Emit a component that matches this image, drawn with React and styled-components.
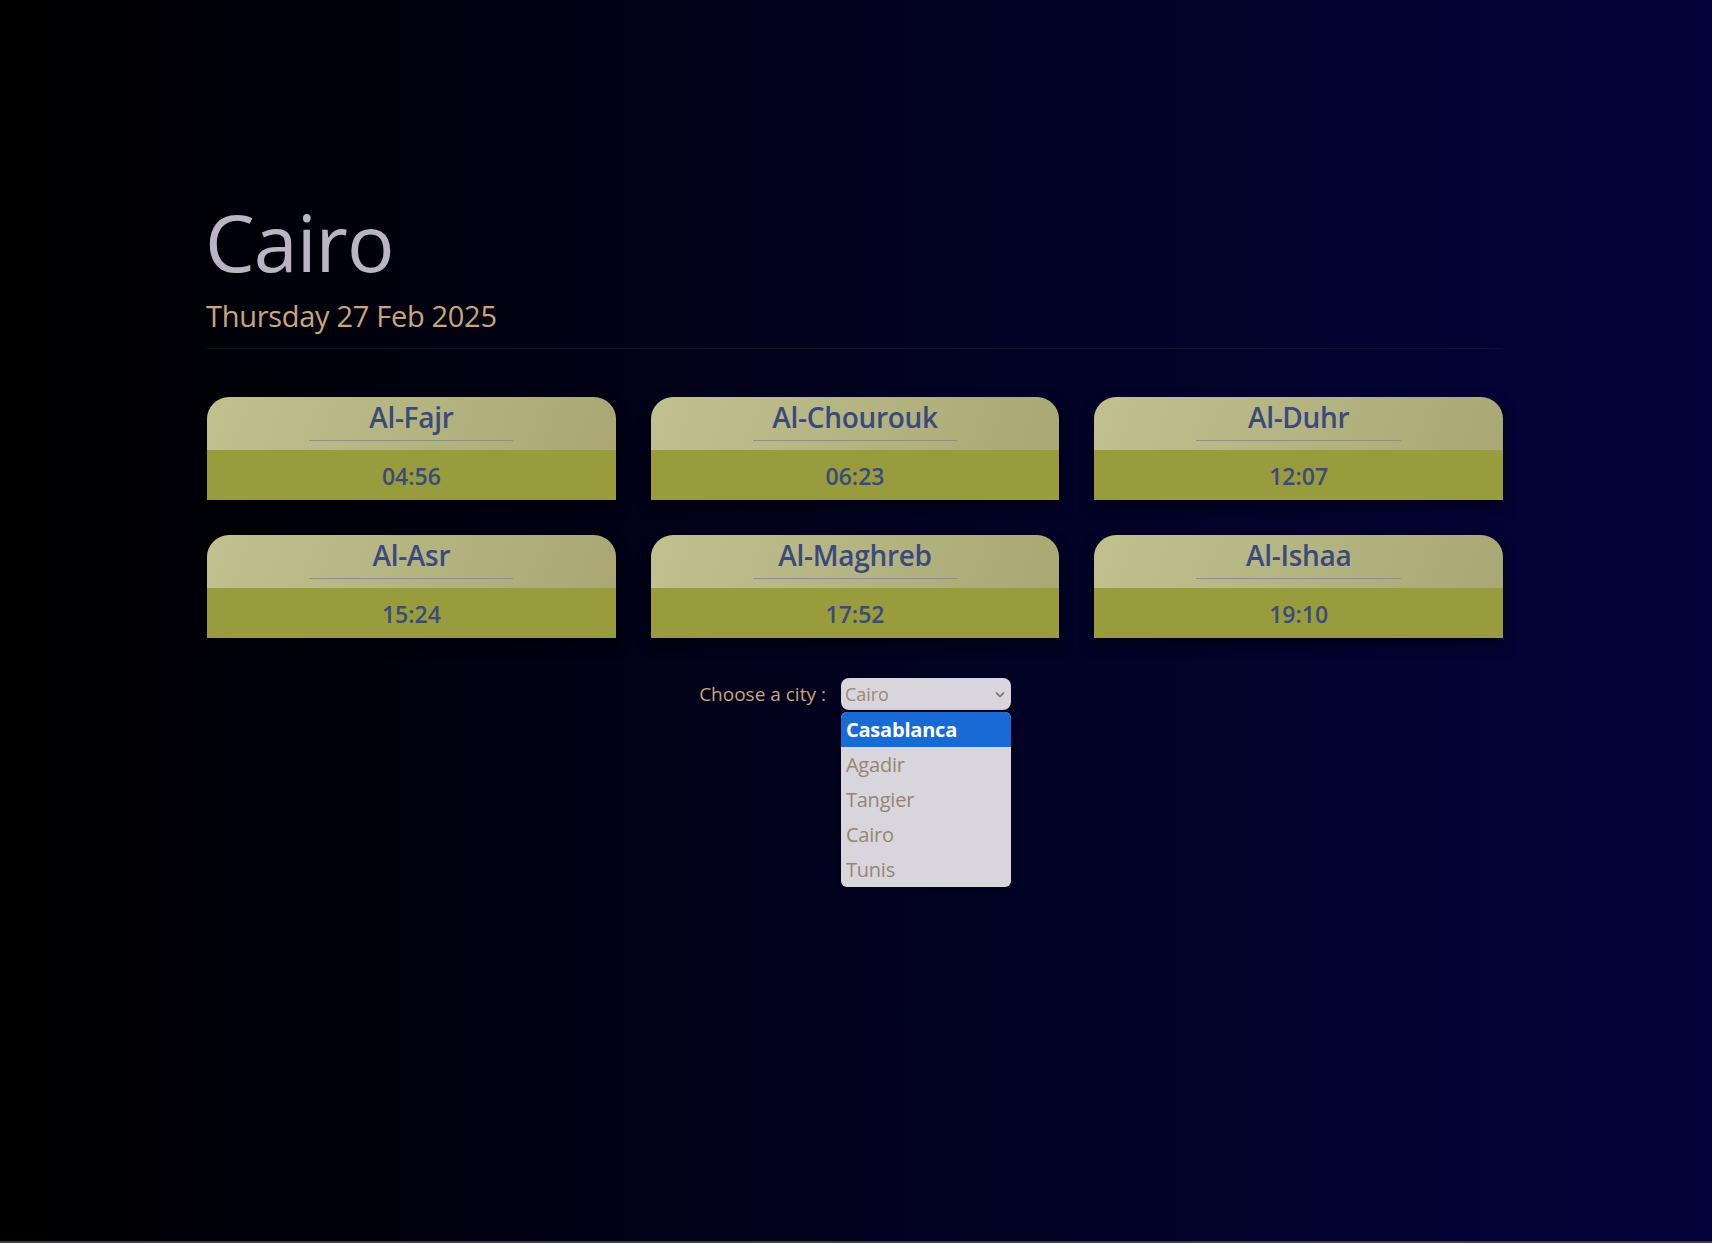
import React, { useState } from "react";
import styled, { createGlobalStyle } from "styled-components";

const GlobalStyle = createGlobalStyle`
  html, body {
    margin: 0;
    padding: 0;
  }
  body {
    font-family: "Open Sans", "Noto Sans", sans-serif;
    background: #000;
  }
`;

const Page = styled.div`
  box-sizing: border-box;
  min-height: 1243px;
  background: linear-gradient(to right, #000000 0%, #02021f 50%, #03033b 100%);
  border-bottom: 2px solid #3c3c44;
  padding-top: 202px;
`;

const Container = styled.div`
  width: 1296px;
  margin: 0 auto;
  transform: translateX(-1px);
`;

const CityTitle = styled.h1`
  margin: 0 0 0 -2px;
  font-size: 79px;
  line-height: 1;
  font-weight: 400;
  color: #bab4c5;
  letter-spacing: -1px;
`;

const DateLine = styled.h2`
  margin: 20px 0 0 -1px;
  font-size: 29px;
  line-height: 1;
  font-weight: 400;
  color: #c9a57f;
  letter-spacing: -0.3px;
`;

const Divider = styled.hr`
  margin: 18px 0 0;
  border: none;
  height: 1px;
  background: #13132a;
`;

const Grid = styled.div`
  margin-top: 48px;
  display: grid;
  grid-template-columns: repeat(3, 1fr);
  column-gap: 35px;
  row-gap: 35px;
`;

const Card = styled.div`
  border-radius: 22px 22px 0 0;
  overflow: hidden;
  box-shadow: 0 6px 14px rgba(0, 0, 0, 0.55);
`;

const CardHead = styled.div`
  padding: 6px 0 9px;
  background: linear-gradient(110deg, #c0c18f 0%, #a9a875 100%);
  display: flex;
  flex-direction: column;
  align-items: center;
`;

const PrayerName = styled.div`
  font-size: 28px;
  line-height: 29px;
  font-weight: 600;
  color: #3b4a7c;
  letter-spacing: -0.3px;
`;

const HeadRule = styled.div`
  margin-top: 8px;
  width: 50%;
  height: 1px;
  background: #8b918a;
`;

const CardTime = styled.div`
  box-sizing: border-box;
  height: 50px;
  padding-top: 2px;
  line-height: 48px;
  text-align: center;
  background: #989c3d;
  color: #3b4a7c;
  font-size: 23px;
  font-weight: 600;
`;

const CityRow = styled.div`
  margin-top: 40px;
  display: flex;
  justify-content: center;
  align-items: center;
  gap: 15px;
`;

const Label = styled.span`
  font-size: 19px;
  color: #c9a57f;
`;

const SelectWrap = styled.div`
  position: relative;
  width: 170px;
`;

const SelectBox = styled.div`
  box-sizing: border-box;
  height: 32px;
  border-radius: 8px;
  background: #d9d5dc;
  display: flex;
  align-items: center;
  justify-content: space-between;
  padding: 0 6px 0 4px;
  font-size: 18px;
  color: #9a8a73;
`;

const OptionList = styled.ul`
  position: absolute;
  top: 34px;
  left: 0;
  right: 0;
  margin: 0;
  padding: 0;
  list-style: none;
  background: #d9d5dc;
  border-radius: 6px;
  overflow: hidden;
  box-shadow: 0 2px 6px rgba(0, 0, 0, 0.4);
`;

const Option = styled.li`
  height: 35px;
  line-height: 35px;
  padding: 0 5px;
  font-size: 20px;
  font-weight: ${(p) => (p.$active ? 700 : 500)};
  color: ${(p) => (p.$active ? "#ffffff" : "#958671")};
  background: ${(p) => (p.$active ? "#1a6ad6" : "transparent")};
  letter-spacing: -0.2px;
`;

const prayers = [
  { name: "Al-Fajr", time: "04:56" },
  { name: "Al-Chourouk", time: "06:23" },
  { name: "Al-Duhr", time: "12:07" },
  { name: "Al-Asr", time: "15:24" },
  { name: "Al-Maghreb", time: "17:52" },
  { name: "Al-Ishaa", time: "19:10" },
];

const cities = ["Casablanca", "Agadir", "Tangier", "Cairo", "Tunis"];

const Chevron = () => (
  <svg width="10" height="7" viewBox="0 0 10 7">
    <path d="M1 1.5 L5 5.5 L9 1.5" fill="none" stroke="#8a7d69" strokeWidth="1.8" />
  </svg>
);

const App = () => {
  const [city] = useState("Cairo");
  return (
    <Page>
      <GlobalStyle />
      <Container>
        <CityTitle>{city}</CityTitle>
        <DateLine>Thursday 27 Feb 2025</DateLine>
        <Divider />
        <Grid>
          {prayers.map((p) => (
            <Card key={p.name}>
              <CardHead>
                <PrayerName>{p.name}</PrayerName>
                <HeadRule />
              </CardHead>
              <CardTime>{p.time}</CardTime>
            </Card>
          ))}
        </Grid>
        <CityRow>
          <Label>Choose a city :</Label>
          <SelectWrap>
            <SelectBox>
              <span>{city}</span>
              <Chevron />
            </SelectBox>
            <OptionList>
              {cities.map((c, i) => (
                <Option key={c} $active={i === 0}>
                  {c}
                </Option>
              ))}
            </OptionList>
          </SelectWrap>
        </CityRow>
      </Container>
    </Page>
  );
};

export default App;
